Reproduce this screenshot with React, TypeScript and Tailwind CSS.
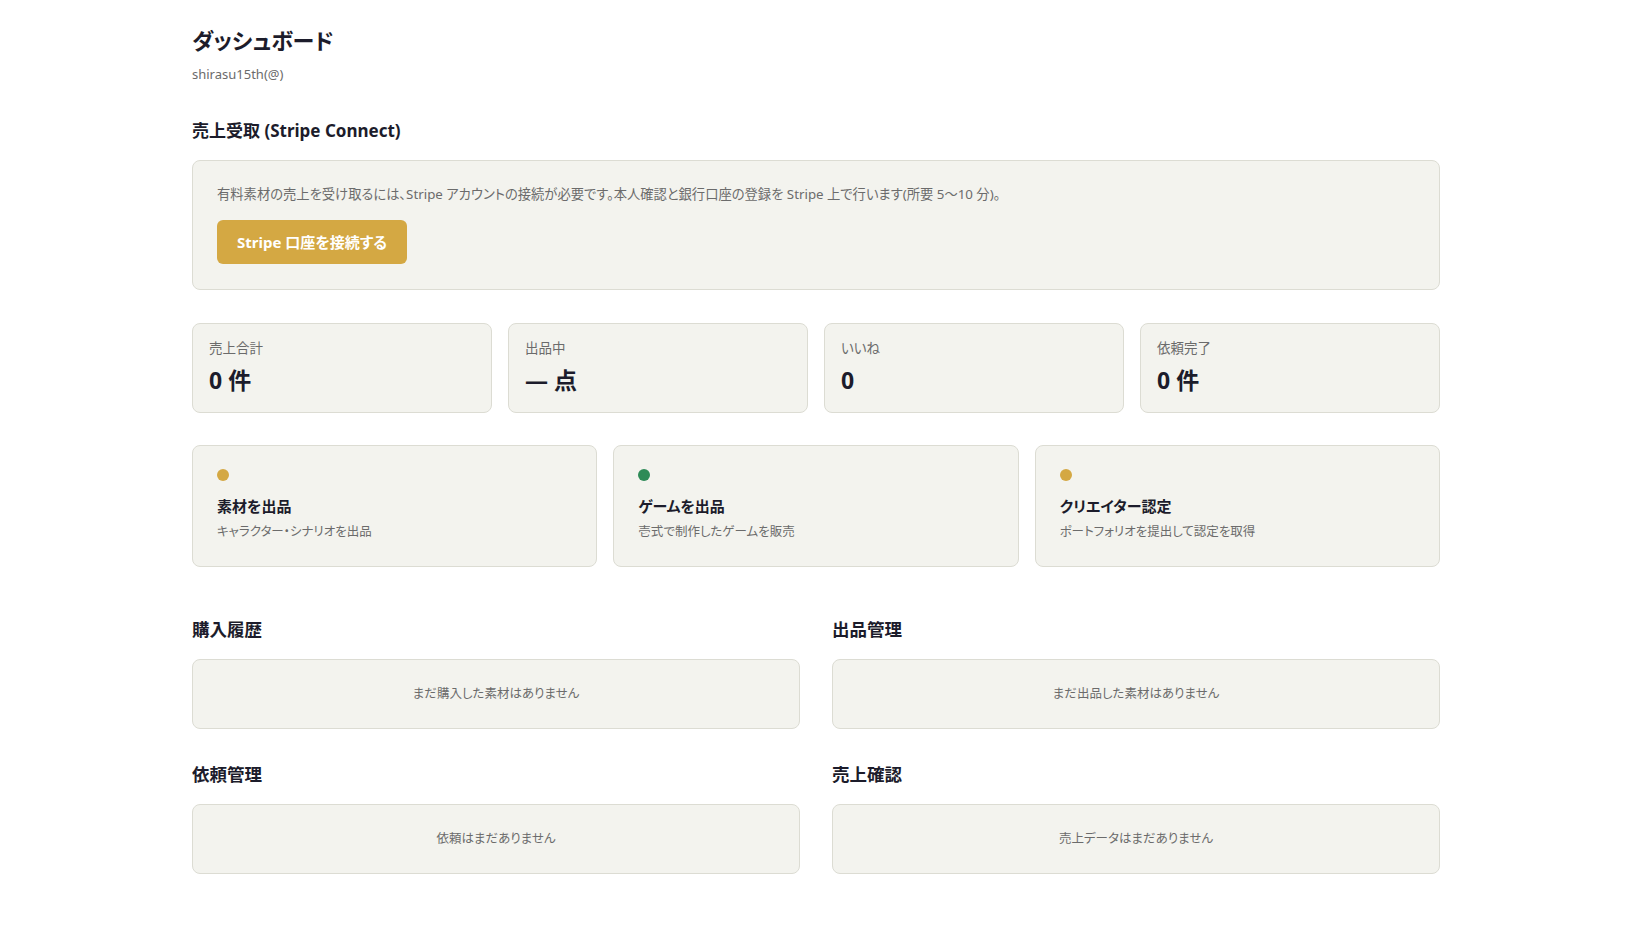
import { ReactNode } from "react";

const stats = [
  { label: "売上合計", value: "0 件" },
  { label: "出品中", value: "— 点" },
  { label: "いいね", value: "0" },
  { label: "依頼完了", value: "0 件" },
];

const actions = [
  { title: "素材を出品", desc: "キャラクター・シナリオを出品", dot: "bg-[#d4a843]" },
  { title: "ゲームを出品", desc: "壱式で制作したゲームを販売", dot: "bg-[#2e8b57]" },
  { title: "クリエイター認定", desc: "ポートフォリオを提出して認定を取得", dot: "bg-[#d4a843]" },
];

const lists = [
  { title: "購入履歴", empty: "まだ購入した素材はありません" },
  { title: "出品管理", empty: "まだ出品した素材はありません" },
  { title: "依頼管理", empty: "依頼はまだありません" },
  { title: "売上確認", empty: "売上データはまだありません" },
];

const Card = ({ children, className = "" }: { children: ReactNode; className?: string }) => (
  <div className={`rounded-lg border border-[#dcdcd3] bg-[#f3f3ee] ${className}`}>{children}</div>
);

export default function App() {
  return (
    <div className="min-h-screen bg-white text-[#1c1c2b] [font-family:'Noto_Sans','Noto_Sans_CJK_JP',sans-serif] [font-feature-settings:'palt']">
      <div className="pl-[192px] pr-[199px] pt-[25px] pb-16">
        <h1 className="text-[22px] font-bold leading-[30px]">ダッシュボード</h1>
        <p className="mt-[10px] text-[13px] leading-[18px] text-[#6b6b6b]">shirasu15th(@)</p>

        <h2 className="mt-[36px] text-[17px] font-bold leading-6">売上受取 (Stripe Connect)</h2>
        <Card className="mt-[17px] px-6 pt-6 pb-[25px]">
          <p className="text-[13.3px] leading-[18px] text-[#6b6b6b]">
            有料素材の売上を受け取るには、Stripe アカウントの接続が必要です。本人確認と銀行口座の登録を Stripe 上で行います(所要 5〜10 分)。
          </p>
          <button className="mt-[17px] h-[44px] rounded-md bg-[#d4a843] px-[20px] text-[15px] font-bold text-white">
            Stripe 口座を接続する
          </button>
        </Card>

        <div className="mt-[33px] grid grid-cols-4 gap-4">
          {stats.map((s) => (
            <Card key={s.label} className="h-[90px] px-4 pt-[14px]">
              <div className="text-[13.5px] leading-[20px] text-[#6b6b6b]">{s.label}</div>
              <div className="mt-[7px] text-[23px] font-bold leading-[30px]">{s.value}</div>
            </Card>
          ))}
        </div>

        <div className="mt-[32px] grid grid-cols-3 gap-4">
          {actions.map((a) => (
            <Card key={a.title} className="h-[122px] px-6 pt-[23px]">
              <div className={`h-3 w-3 rounded-full ${a.dot}`} />
              <div className="mt-[15px] text-[15px] font-bold leading-5">{a.title}</div>
              <div className="mt-[6px] text-[12.5px] leading-5 text-[#6b6b6b]">{a.desc}</div>
            </Card>
          ))}
        </div>

        <div className="mt-[50px] grid grid-cols-2 gap-x-8 gap-y-[33px]">
          {lists.map((l) => (
            <section key={l.title}>
              <h3 className="text-[17.5px] font-bold leading-6">{l.title}</h3>
              <Card className="mt-[18px] flex h-[70px] items-center justify-center">
                <span className="text-[12.5px] text-[#6b6b6b]">{l.empty}</span>
              </Card>
            </section>
          ))}
        </div>
      </div>
    </div>
  );
}
